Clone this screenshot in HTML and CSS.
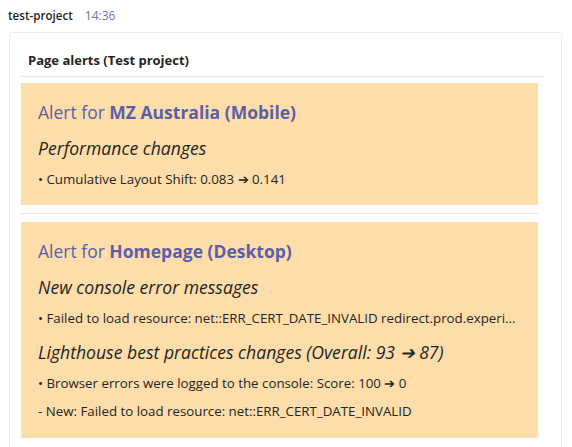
FILE: index.html
```html
<!DOCTYPE html>
<html lang="en">
<head>
    <meta charset="UTF-8">
    <meta name="viewport" content="width=device-width, initial-scale=1.0">
    <title>test-project</title>
    <link rel="stylesheet" href="styles.css">
</head>
<body>
    <div class="message">
        <div class="meta">
            <span class="sender">test-project</span>
            <span class="time">14:36</span>
        </div>

        <div class="card">
            <div class="card-title">Page alerts (Test project)</div>

            <div class="alert">
                <div class="alert-title">Alert for <strong>MZ Australia (Mobile)</strong></div>
                <div class="section-title">Performance changes</div>
                <div class="line">• Cumulative Layout Shift: 0.083 ➔ 0.141</div>
            </div>

            <div class="alert">
                <div class="alert-title">Alert for <strong>Homepage (Desktop)</strong></div>
                <div class="section-title">New console error messages</div>
                <div class="line">• Failed to load resource: net::ERR_CERT_DATE_INVALID redirect.prod.experi...</div>
                <div class="section-title">Lighthouse best practices changes (Overall: 93 ➔ 87)</div>
                <div class="line">• Browser errors were logged to the console: Score: 100 ➔ 0</div>
                <div class="line">- New: Failed to load resource: net::ERR_CERT_DATE_INVALID</div>
            </div>
        </div>
    </div>
</body>
</html>
```

FILE: styles.css
```css
:root {
    --accent-color: #5b5fa7;
    --time-color: #6e70b4;
    --text-color: #252423;
    --alert-bg: #fddeaa;
    --rule-color: #e6e6e6;
    --card-border: #ececec;
}

* {
    margin: 0;
    padding: 0;
    box-sizing: border-box;
}

body {
    font-family: 'Open Sans', 'Noto Sans', sans-serif;
    color: var(--text-color);
    background-color: white;
    width: 572px;
    height: 447px;
    overflow: hidden;
}

.message {
    padding: 7px 10px 0 9px;
}

.meta {
    display: flex;
    align-items: baseline;
    gap: 12px;
    font-size: 12px;
    line-height: 18px;
    margin-left: -1px;
}

.sender {
    font-weight: 600;
    font-size: 11.6px;
}

.time {
    color: var(--time-color);
}

.card {
    margin-top: 7px;
    border: 1px solid var(--card-border);
    border-radius: 3px;
    padding: 11px 17px 0 11px;
    height: 430px;
}

.card-title {
    font-size: 13px;
    font-weight: 700;
    line-height: 32px;
    padding-left: 7px;
    border-bottom: 1px solid var(--rule-color);
    margin-bottom: 6px;
}

.alert {
    background-color: var(--alert-bg);
    margin-right: 6px;
    padding: 13px 17px 16px 17px;
}

.alert + .alert {
    position: relative;
    margin-top: 17px;
    padding-bottom: 17px;
}

.alert + .alert::before {
    content: "";
    position: absolute;
    left: 0;
    right: 0;
    top: -9px;
    border-top: 1px solid var(--rule-color);
}

.alert-title {
    font-size: 17.5px;
    line-height: 32px;
    color: var(--accent-color);
}

.alert-title strong {
    font-weight: 700;
}

.section-title {
    font-size: 17.6px;
    font-style: italic;
    line-height: 24px;
    margin-top: 8px;
}

.line + .section-title {
    margin-top: 12px;
}

.line {
    font-size: 13.3px;
    line-height: 19px;
    margin-top: 10px;
    white-space: nowrap;
}

.line + .line {
    margin-top: 9px;
}
```
